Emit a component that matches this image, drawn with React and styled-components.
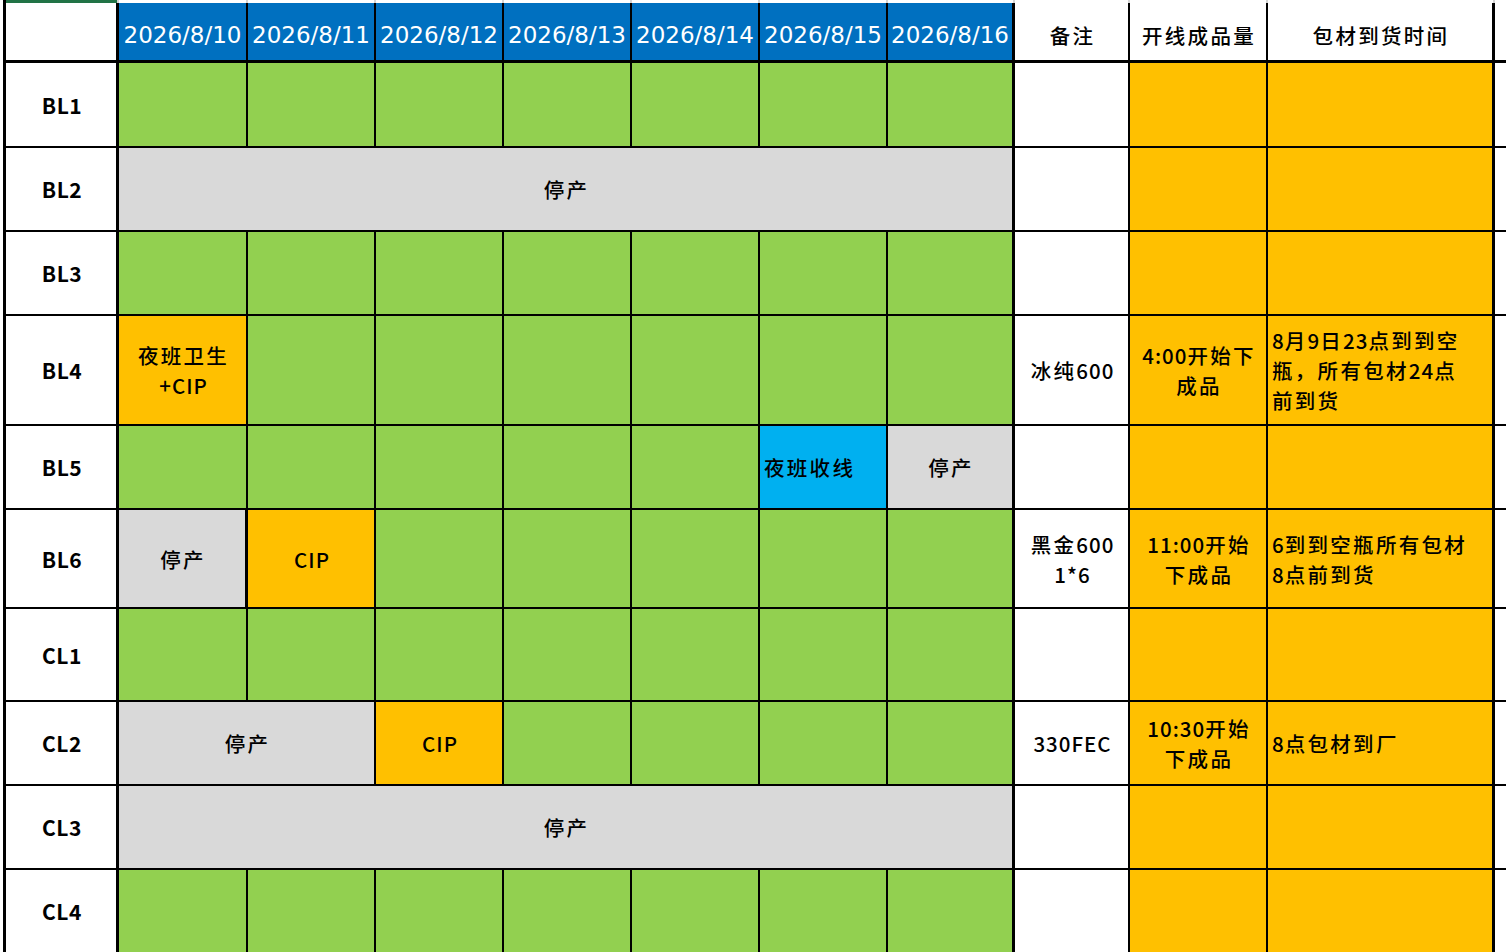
import styled, { createGlobalStyle } from 'styled-components';

const GlobalStyle = createGlobalStyle`
    html, body {
        margin: 0;
        padding: 0;
        background: #ffffff;
        overflow: hidden;
    }
    body {
        font-family: "DejaVu Sans", "Noto Sans CJK SC", sans-serif;
    }
`;

const COLORS = {
    green: '#92d050',
    gray: '#d9d9d9',
    orange: '#ffc000',
    cyan: '#00b0f0',
    blue: '#0070c0',
    white: '#ffffff',
};

const Sheet = styled.div`
    display: grid;
    grid-template-columns: 113px 129px repeat(5, 128px) 127px 115px 138px 227px 40px;
    grid-template-rows: 3px 60px 85px 84px 84px 110px 84px 99px 93px 84px 84px 84px;
    margin-left: 3px;
    border-left: 3px solid #000;
    width: max-content;
`;

const StripCell = styled.div`
    box-sizing: border-box;
    background: ${p => (p.$active ? '#217346' : '#ffffff')};
    border-right: 2px solid #d4d4d4;
`;

const Cell = styled.div`
    box-sizing: border-box;
    grid-column: span ${p => p.$span || 1};
    display: flex;
    align-items: center;
    justify-content: ${p => (p.$left ? 'flex-start' : 'center')};
    text-align: ${p => (p.$left ? 'left' : 'center')};
    padding: ${p => (p.$left ? '0 2px 0 4px' : '0 0 0 2px')};
    background: ${p => COLORS[p.$bg] || COLORS.white};
    border-right: ${p => (p.$br === 0 ? 0 : `${p.$br || 2}px solid #000`)};
    border-bottom: ${p => p.$bb || 2}px solid #000;
    font-family: "Noto Sans CJK SC", sans-serif;
    font-size: 20.5px;
    font-weight: 500;
    line-height: 30px;
    color: #000;
    white-space: nowrap;
    overflow: hidden;
`;

const Run = styled.span`
    letter-spacing: ${p => (p.$cjk ? '2.3px' : '1px')};
`;

const HeadCell = styled(Cell)`
    padding-top: 6px;
`;

const DateCell = styled(HeadCell)`
    font-family: "DejaVu Sans", sans-serif;
    font-size: 23px;
    font-weight: 400;
    color: #ffffff;
    padding-left: 0;
    padding-right: 0;
`;

const LineLabel = styled(Cell)`
    font-weight: 700;
    font-size: 21px;
    letter-spacing: 0.5px;
`;

const Lines = styled.div`
    display: flex;
    flex-direction: column;
`;

const dates = ['2026/8/10', '2026/8/11', '2026/8/12', '2026/8/13', '2026/8/14', '2026/8/15', '2026/8/16'];

const g = (n) => Array.from({ length: n }, () => ({ bg: 'green' }));

const rows = [
    { name: 'BL1', days: g(7) },
    { name: 'BL2', days: [{ bg: 'gray', span: 7, text: ['停产'] }] },
    { name: 'BL3', days: g(7) },
    {
        name: 'BL4',
        days: [{ bg: 'orange', text: ['夜班卫生', '+CIP'] }, ...g(6)],
        remark: ['冰纯600'],
        qty: ['4:00开始下', '成品'],
        pack: ['8月9日23点到到空', '瓶，所有包材24点', '前到货'],
    },
    {
        name: 'BL5',
        days: [...g(5), { bg: 'cyan', text: ['夜班收线'], left: true }, { bg: 'gray', text: ['停产'] }],
    },
    {
        name: 'BL6',
        days: [{ bg: 'gray', text: ['停产'], br: 3 }, { bg: 'orange', text: ['CIP'] }, ...g(5)],
        remark: ['黑金600', '1*6'],
        qty: ['11:00开始', '下成品'],
        pack: ['6到到空瓶所有包材', '8点前到货'],
    },
    { name: 'CL1', days: g(7) },
    {
        name: 'CL2',
        days: [{ bg: 'gray', span: 2, text: ['停产'] }, { bg: 'orange', text: ['CIP'] }, ...g(4)],
        remark: ['330FEC'],
        qty: ['10:30开始', '下成品'],
        pack: ['8点包材到厂'],
    },
    { name: 'CL3', days: [{ bg: 'gray', span: 7, text: ['停产'] }] },
    { name: 'CL4', days: g(7) },
];

// split a line into CJK and latin runs so each gets its own spacing
function Line({ text }) {
    const parts = text.match(/[\u3000-\u9fff\uff00-\uffef]+|[^\u3000-\u9fff\uff00-\uffef]+/g) || [];
    return (
        <span>
            {parts.map((p, i) => (
                <Run key={i} $cjk={/[\u3000-\u9fff\uff00-\uffef]/.test(p)}>{p}</Run>
            ))}
        </span>
    );
}

function Text({ lines }) {
    if (!lines) return null;
    return (
        <Lines>
            {lines.map((l, i) => <Line key={i} text={l} />)}
        </Lines>
    );
}

function App() {
    return (
        <>
            <GlobalStyle />
            <Sheet>
                <StripCell $active />
                {Array.from({ length: 11 }, (_, i) => <StripCell key={i} />)}

                <HeadCell $br={3} $bb={3} />
                {dates.map((d, i) => (
                    <DateCell key={d} $bg="blue" $bb={3} $br={i === 6 ? 3 : 2}>{d}</DateCell>
                ))}
                <HeadCell $bb={3}><Line text="备注" /></HeadCell>
                <HeadCell $bb={3}><Line text="开线成品量" /></HeadCell>
                <HeadCell $bb={3} $br={3}><Line text="包材到货时间" /></HeadCell>
                <HeadCell $bb={3} $br={0} />

                {rows.map(row => {
                    let col = 0;
                    return [
                        <LineLabel key={row.name} $br={3}>{row.name}</LineLabel>,
                        ...row.days.map((d, i) => {
                            col += d.span || 1;
                            const last = col === 7;
                            return (
                                <Cell
                                    key={`${row.name}-${i}`}
                                    $bg={d.bg}
                                    $span={d.span}
                                    $left={d.left}
                                    $br={last ? 3 : d.br || 2}
                                >
                                    <Text lines={d.text} />
                                </Cell>
                            );
                        }),
                        <Cell key={`${row.name}-r`}><Text lines={row.remark} /></Cell>,
                        <Cell key={`${row.name}-q`} $bg="orange"><Text lines={row.qty} /></Cell>,
                        <Cell key={`${row.name}-p`} $bg="orange" $br={3} $left><Text lines={row.pack} /></Cell>,
                        <Cell key={`${row.name}-x`} $br={0} />,
                    ];
                })}
            </Sheet>
        </>
    );
}

export default App;
